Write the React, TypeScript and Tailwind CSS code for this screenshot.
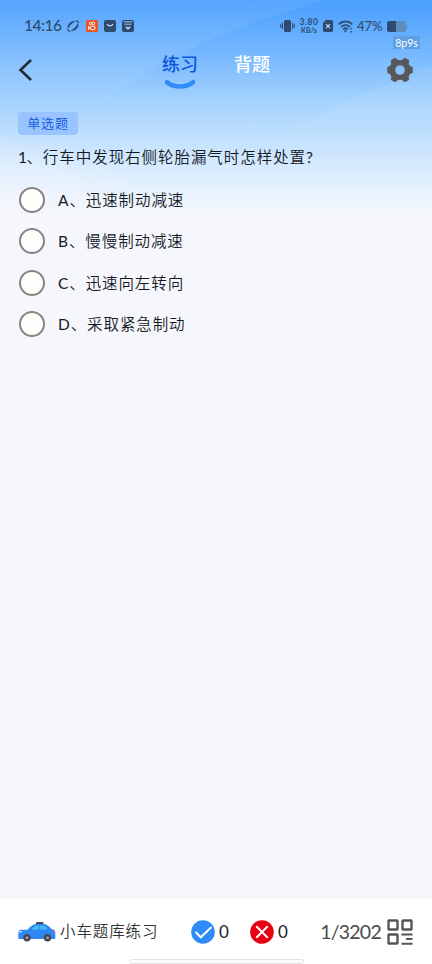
import { useState } from "react";

const options = [
  { key: "A", text: "迅速制动减速" },
  { key: "B", text: "慢慢制动减速" },
  { key: "C", text: "迅速向左转向" },
  { key: "D", text: "采取紧急制动" },
];

function SkyBackground() {
  return (
    <svg
      className="pointer-events-none absolute inset-x-0 top-0 -z-10 h-[240px] w-full"
      viewBox="0 0 432 240"
      preserveAspectRatio="none"
    >
      <defs>
        <linearGradient id="sky" x1="0" y1="0" x2="0" y2="1">
          <stop offset="0" stopColor="#4b9fff" />
          <stop offset="0.1" stopColor="#5ca9fe" />
          <stop offset="0.25" stopColor="#7cbbfe" />
          <stop offset="0.42" stopColor="#a3d2fe" />
          <stop offset="0.6" stopColor="#c7e3fe" />
          <stop offset="0.77" stopColor="#e2f0fd" />
          <stop offset="0.9" stopColor="#f5f7fc" />
          <stop offset="1" stopColor="#f6f7fd" />
        </linearGradient>
        <linearGradient id="wave" x1="0" y1="0" x2="0" y2="1">
          <stop offset="0" stopColor="#fff" stopOpacity="0.06" />
          <stop offset="0.6" stopColor="#fff" stopOpacity="0.08" />
          <stop offset="1" stopColor="#fff" stopOpacity="0" />
        </linearGradient>
        <radialGradient id="glow" cx="0" cy="0.85" r="0.75">
          <stop offset="0" stopColor="#f6f7fd" stopOpacity="0.8" />
          <stop offset="1" stopColor="#f6f7fd" stopOpacity="0" />
        </radialGradient>
      </defs>
      <rect width="432" height="240" fill="url(#sky)" />
      <path d="M0 0H325C245 24 170 48 95 110H0Z" fill="url(#wave)" />
      <path d="M432 65C370 90 325 110 275 140H432Z" fill="url(#wave)" />
      <rect y="120" width="200" height="120" fill="url(#glow)" />
    </svg>
  );
}

function StatusBar() {
  return (
    <div className="flex h-[52px] items-center pl-[24px] pr-[24px] text-[#2c4b6e]">
      <span className="w-[43px] whitespace-nowrap text-[15.5px] font-medium tracking-[-0.450px]">14:16</span>
      <svg className="h-3 w-3" viewBox="0 0 12 12">
        <path d="M.8 9C-.4 4.500 3.600.2 8.600 1 5.500 2.600 2.800 5.600.8 9Z" fill="currentColor" />
        <path d="M11.200 3C12.400 7.500 8.400 11.800 3.400 11 6.500 9.400 9.200 6.400 11.200 3Z" fill="currentColor" />
        <path d="M.8 9c-.3 1.600.8 2.400 2.600 2M8.600 1c2-.4 3.100.4 2.600 2" fill="none" stroke="currentColor" strokeWidth="1.200" />
      </svg>
      <svg className="ml-[7px] h-3 w-3" viewBox="0 0 12 12" fill="none">
        <rect width="12" height="12" rx="2" fill="#ee5423" />
        <g stroke="#fff" strokeWidth="0.900">
          <circle cx="4.400" cy="3.500" r="1.100" />
          <circle cx="7.300" cy="3.300" r="1.400" />
          <rect x="4.600" y="6.200" width="4.400" height="3.400" rx="0.800" />
          <path d="M2.500 6.400v3l2-1.400z" />
        </g>
      </svg>
      <svg className="ml-[6px] h-3 w-3" viewBox="0 0 12 12" fill="none">
        <rect width="12" height="12" rx="2" fill="currentColor" />
        <path d="M3 4c1.600 2.600 4.400 2.600 6 0" stroke="#c4e0fd" strokeWidth="1.200" />
      </svg>
      <svg className="ml-[6px] h-3 w-3" viewBox="0 0 12 12" fill="none">
        <rect width="12" height="12" rx="2" fill="currentColor" />
        <path d="M1.500 1.800h9M2.500 4.200h7" stroke="#a8d1fb" strokeWidth="0.900" />
        <path d="m4 6.700 2 2 2.200-2" stroke="#d4e8fd" strokeWidth="1.400" />
      </svg>

      <svg className="ml-auto h-3 w-[15px]" viewBox="0 0 15 12">
        <rect x="4" width="7" height="12" rx="1.500" fill="currentColor" />
        <path d="M2.400 3v6M12.700 3v6M.6 4.500v3M14.500 4.500v3" stroke="currentColor" strokeWidth="1.200" />
      </svg>
      <div className="ml-[4px] flex w-[20px] flex-col items-center font-[Lato] font-bold">
        <span className="text-[8.500px] leading-[8px] tracking-[0.500px]">3.80</span>
        <span className="text-[7px] leading-[8px] tracking-[0.100px]">KB/s</span>
      </div>
      <svg className="ml-[4px] h-3 w-[10px]" viewBox="0 0 10 12">
        <path d="M3 0h5.500Q10 0 10 1.500v9Q10 12 8.500 12h-7Q0 12 0 10.500V3Z" fill="currentColor" />
        <path d="m3 4.200 4 4M7 4.200l-4 4" stroke="#b5d8fc" strokeWidth="1.200" />
      </svg>
      <svg className="ml-[5px] h-[13px] w-[15px]" viewBox="0 0 15 13" fill="none" stroke="currentColor" strokeWidth="1.700">
        <path d="M.7 4.300C4.500.5 10.500.5 14.300 4.300M3 7c2.600-2.500 6.400-2.500 9 0M5.200 9.300c1.300-1.200 3.300-1.200 4.600 0" />
        <path d="M6.200 10.800h2.600L7.500 12.200Z" fill="currentColor" strokeWidth="0.500" />
        <path d="M13 8v1.500M13 11v1.500" strokeWidth="1.500" />
      </svg>
      <span className="ml-[4px] mt-[2px] w-[27px] whitespace-nowrap text-[13px] font-medium">47%</span>
      <svg className="ml-[3px] h-[11px] w-[21px]" viewBox="0 0 21 11">
        <rect width="19" height="11" rx="2.500" fill="#5e8cbd" />
        <path d="M2.500 0H9v11H2.500A2.500 2.500 0 0 1 0 8.500v-6A2.500 2.500 0 0 1 2.500 0Z" fill="currentColor" />
        <path d="M19.500 3.500q1.500.2 1.500 2t-1.500 2Z" fill="#5e8cbd" />
      </svg>
    </div>
  );
}

function GearIcon() {
  return (
    <svg className="h-[26px] w-[26px]" viewBox="0 0 26 26">
      <path
        fillRule="evenodd"
        fill="#58575b"
        d="M7.600.9Q8.400.5 9 1.200C9.800 2.300 11 3.200 13 3.200S16.200 2.300 17 1.200Q17.600.5 18.400.9L21.600 2.700Q22.400 3.200 22.100 4C21.600 5.300 21.600 6.600 22.400 7.900 23.100 9 24 9.500 25 9.700Q25.800 9.900 25.800 10.800V15.200Q25.800 16.100 25 16.300C24 16.500 23.100 17 22.400 18.100 21.600 19.400 21.600 20.700 22.100 22Q22.400 22.800 21.600 23.300L18.400 25.100Q17.600 25.500 17 24.800C16.200 23.700 15 22.800 13 22.800S9.800 23.700 9 24.800Q8.400 25.500 7.600 25.100L4.400 23.300Q3.600 22.800 3.900 22C4.400 20.700 4.400 19.400 3.600 18.100 2.900 17 2 16.500 1 16.300Q.2 16.100.2 15.200V10.800Q.2 9.900 1 9.700C2 9.500 2.900 9 3.600 7.900 4.400 6.600 4.400 5.300 3.900 4Q3.600 3.200 4.400 2.700ZM13 8.200A4.800 4.800 0 1 0 13 17.800 4.800 4.800 0 1 0 13 8.200Z"
      />
    </svg>
  );
}

function CarIcon() {
  return (
    <svg className="h-[21px] w-[38px]" viewBox="0 0 38 21">
      <rect x="18" y="1" width="7.500" height="3" rx="1" fill="#4a4a55" />
      <path
        d="M9.500 8.800C12.500 4.800 15.500 3 19.500 3H25C28.500 3 31 5 33.500 8 36 8.500 37.300 10 37.300 12V17Q37.300 18 36.300 18H1.300Q.3 18 .3 17V11Q.8 8.800 3.500 8.800Z"
        fill="#2f87f2"
      />
      <path d="M13.500 8.500C15.500 5.800 17.500 4.500 20.500 4.500V8.500Z" fill="#43c4ef" />
      <path d="M21.500 4.500H25C27 4.500 28.500 6 29.500 8.500H21.500Z" fill="#43b6ee" />
      <path d="M1.500 10H4.500L3 11.500H1Z" fill="#dff1ff" />
      <path d="M35 8.500L36.500 9.200Q37.400 10 37.300 11.800L35.500 11.200Z" fill="#d5668f" />
      <circle cx="9" cy="16.800" r="3.700" fill="#474753" />
      <circle cx="9" cy="16.800" r="1.300" fill="#a9a9b3" />
      <circle cx="29.500" cy="16.800" r="3.700" fill="#474753" />
      <circle cx="29.500" cy="16.800" r="1.300" fill="#a9a9b3" />
    </svg>
  );
}

export default function App() {
  const [selected, setSelected] = useState<string | null>(null);

  return (
    <main className="relative isolate flex h-[964px] w-[432px] flex-col overflow-hidden bg-[#f6f7fd] font-[Lato,'Noto_Sans_CJK_SC',sans-serif] text-[#15191f]">
      <SkyBackground />
      <StatusBar />

      <header className="relative flex h-[60px] items-start justify-between pl-[18px] pr-[19px]">
        <button aria-label="返回" className="mt-[6px]">
          <svg className="h-6 w-[15px]" viewBox="0 0 15 24" fill="none">
            <path d="M13 2 2.500 12 13 22" stroke="#232b36" strokeWidth="2.600" />
          </svg>
        </button>
        <nav className="ml-[12px] flex gap-[36px] text-[18px] font-medium leading-6">
          <div className="flex flex-col items-center">
            <span className="text-[#0b57df]">练习</span>
            <svg className="mt-[3px] h-[11px] w-8" viewBox="0 0 32 11" fill="none">
              <path d="M3 3.200C10 9 22 9 29 3.200" stroke="#2f8cf8" strokeWidth="4.600" strokeLinecap="round" />
            </svg>
          </div>
          <span className="text-white">背题</span>
        </nav>
        <button aria-label="设置" className="mt-[5px]">
          <GearIcon />
        </button>
        <span className="absolute right-[12px] top-[-16px] flex h-[13px] w-[27px] items-center justify-center bg-[#5f9fe3] pt-px text-[10.500px] leading-none text-white">
          8p9s
        </span>
      </header>

      <section className="flex-1 pl-[18px]">
        <span className="flex h-[23px] w-[60px] items-center justify-center rounded bg-[#9ac4ff] text-[13px] font-[350] leading-none tracking-[0.8px] text-[#0b57df]">
          单选题
        </span>
        <h1 className="mt-[10px] whitespace-nowrap text-[15.500px] font-[350] leading-6 tracking-[0.950px]">
          <span className="font-normal tracking-[-0.600px]">1</span>、行车中发现右侧轮胎漏气时怎样处置
          <span className="font-normal">?</span>
        </h1>
        <div className="mt-[10px]">
          {options.map((option) => (
            <button
              key={option.key}
              onClick={() => setSelected(option.key)}
              className="flex h-[41.500px] w-full items-center pl-[1px]"
            >
              <span className="grid h-[26px] w-[26px] place-items-center rounded-full border-2 border-[#858585] bg-[#fefffc]">
                {selected === option.key && <span className="h-3 w-3 rounded-full bg-[#2f8cf8]" />}
              </span>
              <span className="pl-[13px] text-[15.500px] font-[350] leading-6 tracking-[0.900px]">
                <span className="font-normal">{option.key}</span>、{option.text}
              </span>
            </button>
          ))}
        </div>
      </section>

      <footer className="flex h-[65px] flex-col items-center bg-white">
        <div className="flex h-[60px] w-full items-center pl-[18px] pr-[19px] pt-[5px] text-[#4b4b4b]">
          <CarIcon />
          <span className="ml-[4px] w-[131px] pt-px text-[15.500px] font-[350] tracking-[0.900px] text-[#333]">
            小车题库练习
          </span>
          <svg className="h-6 w-6" viewBox="0 0 24 24" fill="none">
            <circle cx="12" cy="12" r="11.800" fill="#2f8bfb" />
            <path d="m4.500 12 5.300 5.300L20.500 7" stroke="#fff" strokeWidth="2" />
          </svg>
          <span className="ml-[4px] w-[31px] text-[17px] text-[#222]">0</span>
          <svg className="h-6 w-6" viewBox="0 0 24 24" fill="none">
            <circle cx="12" cy="12" r="11.800" fill="#e60012" />
            <path d="m6.300 6.300 11.400 11.400M17.700 6.300 6.300 17.700" stroke="#fff" strokeWidth="2" />
          </svg>
          <span className="ml-[4px] text-[17px] text-[#222]">0</span>
          <span className="ml-auto text-[19.500px] tracking-[-0.750px]">1/3202</span>
          <svg className="ml-[6px] h-[26px] w-[26px]" viewBox="0 0 26 26" fill="none" stroke="#555" strokeWidth="2.400">
            <rect x="1.500" y="1.500" width="9" height="9" rx="0.500" />
            <rect x="15.500" y="1.500" width="9" height="9" rx="0.500" />
            <rect x="1.500" y="15.500" width="9" height="9" rx="0.500" />
            <path d="M14.500 15.500H25.500M19 20h6.500M14.500 24.700h11" strokeWidth="2" />
          </svg>
        </div>
        <div className="h-[5px] w-[175px] rounded-full border border-[#e4e4e4] bg-[#fafafa]" />
      </footer>
    </main>
  );
}
